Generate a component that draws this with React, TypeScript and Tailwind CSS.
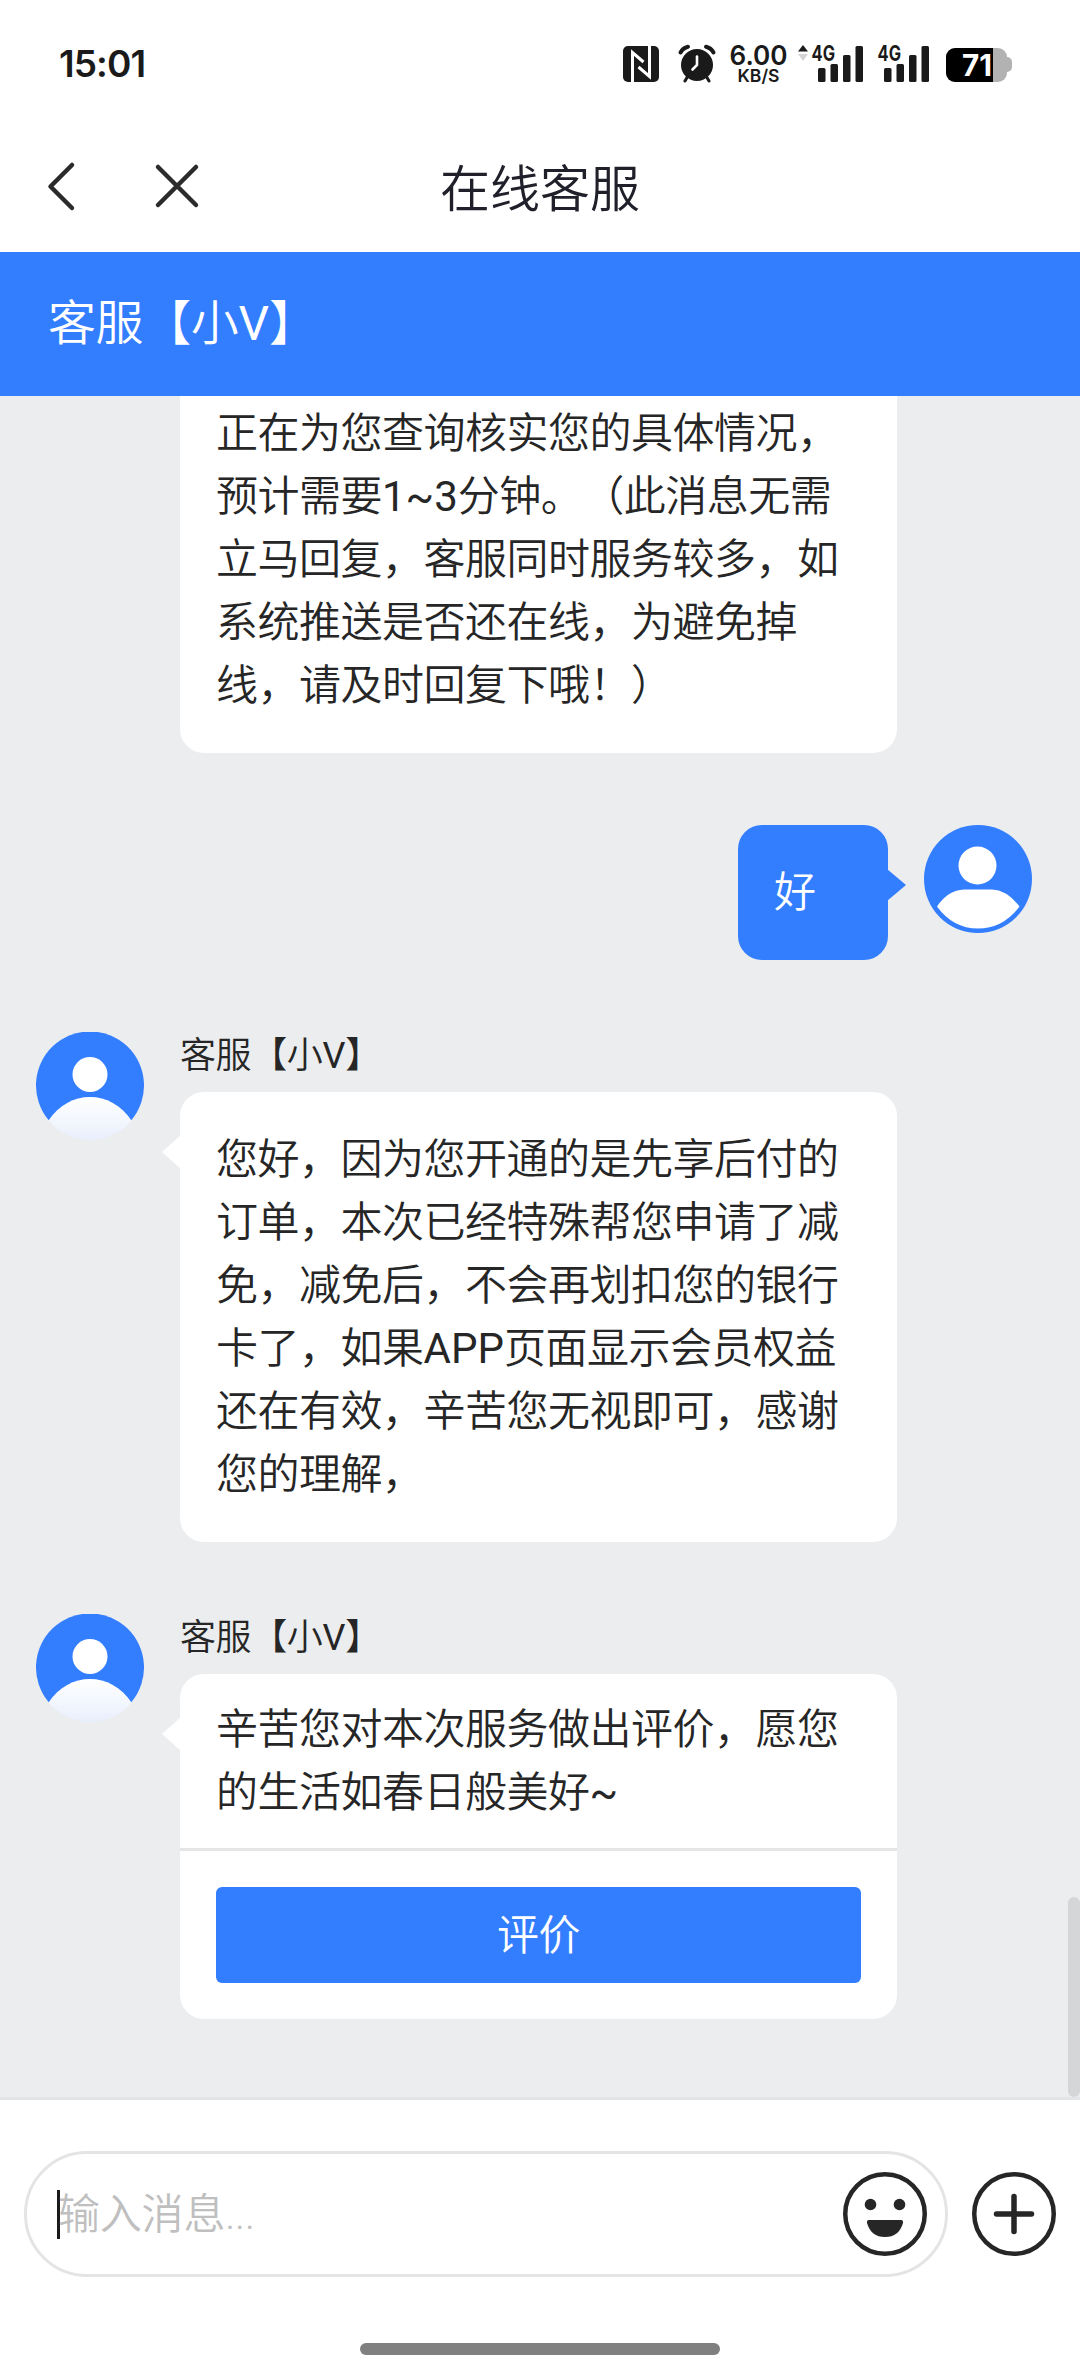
import React, { useState } from 'react';

interface AgentMessageProps {
    name: string;
    children: React.ReactNode;
}

const AGENT_NAME = '客服【小V】';

const INTRO_LINES = [
    '正在为您查询核实您的具体情况，',
    '预计需要1~3分钟。（此消息无需',
    '立马回复，客服同时服务较多，如',
    '系统推送是否还在线，为避免掉',
    '线，请及时回复下哦！）',
];

const REPLY_LINES = [
    '您好，因为您开通的是先享后付的',
    '订单，本次已经特殊帮您申请了减',
    '免，减免后，不会再划扣您的银行',
    '卡了，如果APP页面显示会员权益',
    '还在有效，辛苦您无视即可，感谢',
    '您的理解，',
];

const RATING_LINES = ['辛苦您对本次服务做出评价，愿您', '的生活如春日般美好~'];

const Signal: React.FC = () => (
    <svg className="h-[40px] w-[54px] overflow-visible" viewBox="0 0 54 40" fill="#1a1a1a">
        <text x="1.5" y="18" fontSize="21.5" fontWeight="700" textLength="23.5" lengthAdjust="spacingAndGlyphs">4G</text>
        <rect x="8" y="25" width="7.5" height="14" rx="1.5" />
        <rect x="20.5" y="21" width="7.5" height="18" rx="1.5" />
        <rect x="33" y="12" width="7.5" height="27" rx="1.5" />
        <rect x="45.5" y="3" width="7.5" height="36" rx="1.5" />
    </svg>
);

const StatusBar: React.FC = () => (
    <div className="flex h-[126px] items-center justify-between pl-[59px] pr-[66px] text-[#1a1a1a] [font-family:Inter,sans-serif]">
        <span className="text-[37px] leading-none font-semibold tracking-[-0.9px]">15:01</span>
        <div className="flex items-center">
            <svg className="h-[40px] w-[38px]" viewBox="0 0 38 40">
                <rect x="1" y="3" width="36" height="36" rx="5" fill="#1a1a1a" />
                <path d="M10.5 39V9.5L21.5 19M27.5 3V33.5L16.5 24" fill="none" stroke="#fff" strokeWidth="3" />
            </svg>
            <svg className="ml-[17px] h-[40px] w-[40px]" viewBox="0 0 40 40">
                <g fill="none" stroke="#1a1a1a" strokeLinecap="round">
                    <path d="M3.5 9.5Q6 5 11 3.8M36.5 9.5Q34 5 29 3.8" strokeWidth="4" />
                    <path d="M10 34.5L8 38M30 34.5L32 38" strokeWidth="3" />
                </g>
                <circle cx="20" cy="22" r="16" fill="#1a1a1a" />
                <path d="M20 13.5V22L15.5 26.5" fill="none" stroke="#fff" strokeWidth="2.6" strokeLinecap="round" />
            </svg>
            <svg className="ml-[12px] h-[40px] w-[60px] overflow-visible" viewBox="0 0 60 40" fill="#1a1a1a">
                <text x="0.5" y="22" fontSize="27" fontWeight="600" textLength="58" lengthAdjust="spacingAndGlyphs">6.00</text>
                <text x="8.5" y="38.5" fontSize="17.5" fontWeight="600" textLength="42" lengthAdjust="spacingAndGlyphs">KB/S</text>
            </svg>
            <svg className="mr-[1px] ml-[8px] h-[40px] w-[12px]" viewBox="0 0 12 40">
                <path d="M6 2L11 8.5H1Z" fill="#1a1a1a" />
                <path d="M6 18L11 11H1Z" fill="#d4d4d4" />
            </svg>
            <Signal />
            <span className="w-[12px]" />
            <Signal />
            <svg className="ml-[14px] h-[40px] w-[70px]" viewBox="0 0 70 40">
                <defs>
                    <clipPath id="battery">
                        <rect x="2" y="5" width="61" height="34" rx="9" />
                    </clipPath>
                </defs>
                <rect x="57" y="14" width="11" height="15" rx="5" fill="#b2b2b2" />
                <rect x="2" y="5" width="61" height="34" rx="9" fill="#b2b2b2" />
                <rect x="2" y="5" width="47" height="34" fill="#000" clipPath="url(#battery)" />
                <text x="18" y="33" fontSize="30" fontWeight="700" fill="#fff" textLength="30" lengthAdjust="spacingAndGlyphs">71</text>
            </svg>
        </div>
    </div>
);

const UserAvatar: React.FC = () => (
    <svg className="h-[108px] w-[108px] shrink-0" viewBox="0 0 108 108">
        <circle cx="54" cy="54" r="54" fill="#337dff" />
        <circle cx="53.5" cy="40.5" r="19" fill="#fff" />
        <path d="M13 81.5Q24 65 40 64.5H68Q83 65 95.5 81.5Q79 103.5 54 103.5Q29 103.5 13 81.5Z" fill="#fff" />
    </svg>
);

const AgentAvatar: React.FC = () => (
    <svg className="h-[108px] w-[108px] shrink-0" viewBox="0 0 108 108">
        <defs>
            <linearGradient id="shoulders" x1="0" y1="0" x2="0" y2="1">
                <stop offset="0" stopColor="#ffffff" />
                <stop offset="1" stopColor="#e8effc" />
            </linearGradient>
        </defs>
        <path d="M12.5 88A54 54 0 1 1 95.5 88Z" fill="#337dff" />
        <circle cx="54" cy="42.5" r="17.5" fill="#fff" />
        <path d="M12.5 88.5C23 73 38 65 54 65S85 73 95.5 88.5A54 54 0 0 1 12.5 88.5Z" fill="url(#shoulders)" />
    </svg>
);

// latin letters and digits are set a little heavier and wider than the hanzi
const MixedText: React.FC<{ text: string }> = ({ text }) => (
    <>
        {text.split(/([\x21-\x7e]+)/).map((part, i) => (
            i % 2 === 1 ? <span key={i} className="font-normal tracking-normal">{part}</span> : part
        ))}
    </>
);

const Lines: React.FC<{ lines: string[] }> = ({ lines }) => (
    <div className="text-[42px] leading-[63px] tracking-[-0.5px] whitespace-nowrap">
        {lines.map(line => <p key={line}><MixedText text={line} /></p>)}
    </div>
);

const AgentMessage: React.FC<AgentMessageProps> = ({ name, children }) => (
    <div className="flex items-start gap-9 pl-9">
        <AgentAvatar />
        <div>
            <div className="h-[60px] text-[36px] leading-[49px] tracking-[-0.4px]"><MixedText text={name} /></div>
            <div className="relative w-[717px] rounded-[24px] bg-white">
                <svg className="absolute top-[43px] left-[-18px] h-[34px] w-[19px]" viewBox="0 0 19 34">
                    <path d="M19 0L0 17L19 34Z" fill="#fff" />
                </svg>
                {children}
            </div>
        </div>
    </div>
);

const App: React.FC = () => {
    const [message, setMessage] = useState('');

    return (
        <div className="flex h-[2376px] w-[1080px] flex-col overflow-hidden bg-white font-[350] text-[#262626] [font-family:Roboto,'Noto_Sans_CJK_SC',sans-serif] [text-spacing-trim:space-all]">
            <StatusBar />

            <header className="grid h-[126px] grid-cols-[1fr_auto_1fr] items-center">
                <div className="flex items-center gap-[72px] pb-1 pl-[44px]">
                    <svg className="h-[54px] w-[36px]" viewBox="0 0 36 54" fill="none" stroke="#2b2b2b" strokeWidth="4.5" strokeLinecap="round" strokeLinejoin="round">
                        <path d="M28 5L6.5 26.5L28 48" />
                    </svg>
                    <svg className="h-[54px] w-[50px]" viewBox="0 0 50 54" fill="none" stroke="#2b2b2b" strokeWidth="4.5" strokeLinecap="round">
                        <path d="M6 7L44 45M44 7L6 45" />
                    </svg>
                </div>
                <h1 className="pt-[2px] text-[50px] leading-[60px] text-[#20202a]">在线客服</h1>
                <div />
            </header>

            <div className="flex h-[144px] items-center bg-[#337dff] pl-12 text-[48px] text-white">
                <span className="tracking-[-0.4px]"><MixedText text={AGENT_NAME} /></span>
            </div>

            <main className="relative flex h-[1704px] flex-col gap-[72px] border-b-3 border-[#e3e4e5] bg-[#ebedef]">
                <div className="ml-[180px] w-[717px] rounded-b-[24px] bg-white px-9 pt-[6px] pb-9">
                    <Lines lines={INTRO_LINES} />
                </div>

                <div className="flex items-start justify-end gap-9 pr-12">
                    <div className="relative h-[135px] w-[150px] rounded-[24px] bg-[#337dff] px-9 py-9 text-white">
                        <Lines lines={['好']} />
                        <svg className="absolute top-[44px] right-[-18px] h-[32px] w-[19px]" viewBox="0 0 19 32">
                            <path d="M0 0L19 16L0 32Z" fill="#337dff" />
                        </svg>
                    </div>
                    <UserAvatar />
                </div>

                <AgentMessage name={AGENT_NAME}>
                    <div className="p-9">
                        <Lines lines={REPLY_LINES} />
                    </div>
                </AgentMessage>

                <AgentMessage name={AGENT_NAME}>
                    <div className="border-b-3 border-[#e5e5e5] px-9 py-6">
                        <Lines lines={RATING_LINES} />
                    </div>
                    <div className="p-9">
                        <button className="block h-[96px] w-full rounded-[6px] bg-[#337dff] text-[42px] tracking-[-0.5px] text-white">
                            评价
                        </button>
                    </div>
                </AgentMessage>

                <div className="absolute right-0 bottom-0 h-[200px] w-3 rounded-full bg-[#d5d6d8]" />
            </main>

            <footer className="flex grow flex-col items-center justify-between pt-[51px] pb-[21px]">
                <div className="flex w-full items-center gap-6 px-6">
                    <div className="flex h-[126px] w-[924px] items-center justify-between rounded-full border-3 border-[#e4e4e4] pr-[18px] pl-[30px]">
                        <div className="flex items-center">
                            <span className="h-[49px] w-[3px] bg-[#1a1a1a]" />
                            <input
                                value={message}
                                onChange={e => setMessage(e.target.value)}
                                placeholder="输入消息..."
                                className="-ml-[2px] h-[63px] w-[600px] text-[42px] tracking-[-0.2px] outline-none placeholder:text-[#bfbfbf]"
                            />
                        </div>
                        <svg className="h-[84px] w-[84px]" viewBox="0 0 84 84" fill="#262626">
                            <circle cx="42" cy="42" r="39.75" fill="none" stroke="#262626" strokeWidth="4.5" />
                            <circle cx="27.5" cy="32.5" r="5.8" />
                            <circle cx="56.5" cy="32.5" r="5.8" />
                            <path d="M26 48H58Q60.5 48 60 51Q56 65 42 65T24 51Q23.5 48 26 48Z" />
                        </svg>
                    </div>
                    <svg className="h-[84px] w-[84px]" viewBox="0 0 84 84" fill="none" stroke="#262626">
                        <circle cx="42" cy="42" r="39.75" strokeWidth="4.5" />
                        <path d="M24.5 42H59.5M42 24.5V59.5" strokeWidth="5.5" strokeLinecap="round" />
                    </svg>
                </div>
                <div className="h-3 w-[360px] rounded-full bg-[#808080]" />
            </footer>
        </div>
    );
};

export default App;
